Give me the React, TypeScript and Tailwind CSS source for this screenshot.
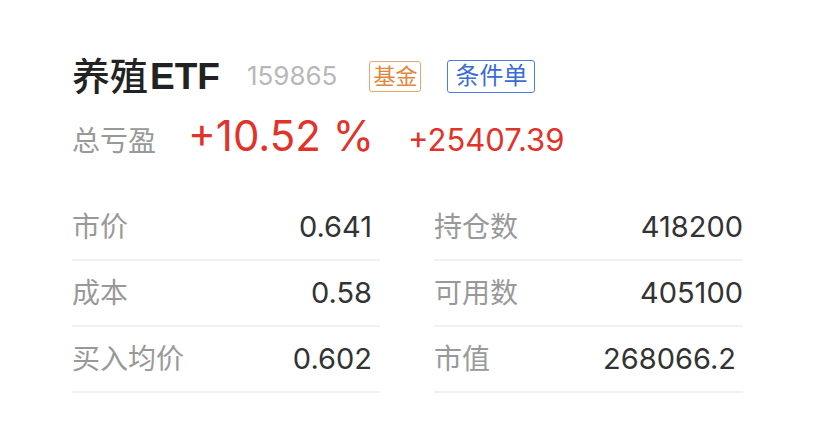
import React from 'react';

const rows: [string, string, string, string, string?][] = [
  ['市价', '0.641', '持仓数', '418200'],
  ['成本', '0.58', '可用数', '405100'],
  ['买入均价', '0.602', '市值', '268066.2', 'pr-[7px]'],
];

const App: React.FC = () => {
  return (
    <div className='w-[828px] h-[437px] bg-white pl-[72px] pt-[54px] font-["Inter","Noto_Sans_CJK_SC",sans-serif]'>
      {/* header */}
      <div className="flex items-center h-[44px]">
        <span className="text-[38px] font-medium text-[#222] leading-none">养殖</span>
        <span className='ml-[2px] text-[37px] font-bold text-[#222] leading-none font-["Liberation_Sans",sans-serif]'>ETF</span>
        <span className="ml-[27px] text-[26px] text-[#b8b8b8] leading-none">159865</span>
        <span className="ml-[32px] h-[31px] px-[3px] flex items-center border border-[#eaa66e] rounded-[3px] text-[22px] text-[#e0873d] leading-none">
          基金
        </span>
        <span className="ml-[26px] h-[33px] px-[7px] flex items-center border border-[#4a7ee0] rounded-[3px] text-[24px] text-[#3a6cd6] leading-none">
          条件单
        </span>
      </div>

      {/* profit */}
      <div className="mt-[6px] h-[48px] flex items-baseline">
        <span className="text-[28px] text-[#999]">总亏盈</span>
        <span className="ml-[32px] text-[42px] text-[#e0342b]">+10.52 %</span>
        <span className="ml-[34px] text-[31px] text-[#e0342b]">+25407.39</span>
      </div>

      {/* positions */}
      <div className="mt-[43px] grid grid-cols-[308px_309px] gap-x-[54px]">
        {rows.map(([l1, v1, l2, v2, pad]) => (
          <React.Fragment key={l1}>
            <div className="h-[66px] flex items-center justify-between border-b-2 border-[#f1f1f1] pr-[8px]">
              <span className="text-[28px] text-[#999]">{l1}</span>
              <span className="text-[29px] text-[#333]">{v1}</span>
            </div>
            <div className={`h-[66px] flex items-center justify-between border-b-2 border-[#f1f1f1] ${pad ?? ''}`}>
              <span className="text-[28px] text-[#999]">{l2}</span>
              <span className="text-[29px] text-[#333]">{v2}</span>
            </div>
          </React.Fragment>
        ))}
      </div>
    </div>
  );
};

export default App;
